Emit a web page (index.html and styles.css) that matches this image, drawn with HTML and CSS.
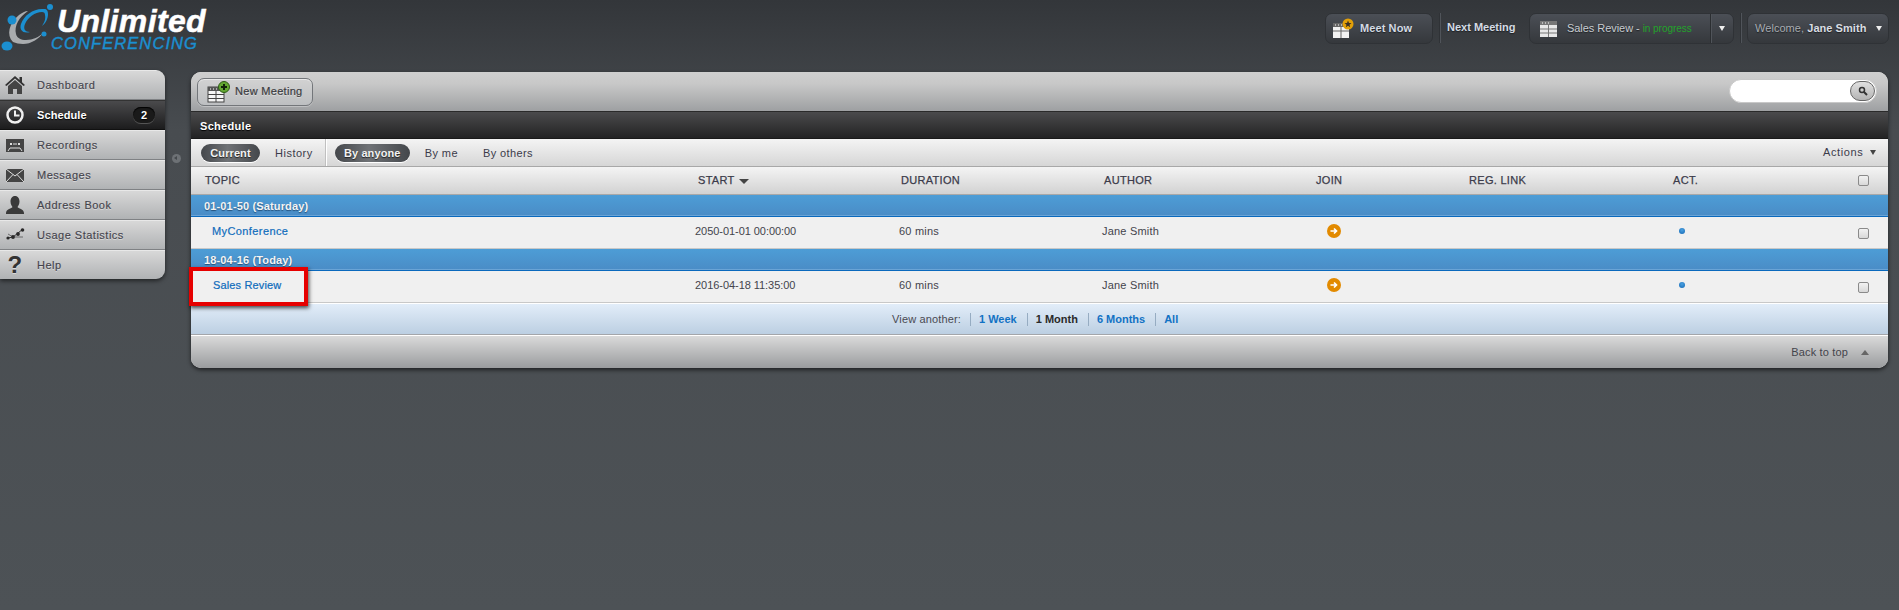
FILE: index.html
```html
<!DOCTYPE html>
<html lang="en">
<head>
<meta charset="utf-8">
<title>Schedule - Unlimited Conferencing</title>
<link rel="stylesheet" href="styles.css">
</head>
<body>
<header class="topbar">
  <div class="logo">
    <svg class="logo-mark" width="56" height="54" viewBox="0 0 56 54">
      <path d="M13 41C6 34 9 22 19 14c3-2 6-4 9-4-9 6-14 15-12 23 1 4 5 6 10 6 7 0 13-3 17-7-4 6-12 11-20 11-4 0-7-1-10-2z" fill="#a9acaf"/>
      <path d="M44 8C34 7 24 14 21 23c-2 6 2 10 9 8-5 0-7-3-5-8 3-7 10-12 17-12 2 0 3 1 3 3 1 4-1 8-3 11 4-3 6-8 6-12 0-3-1-5-4-5z" fill="#1b8fd0"/>
      <circle cx="50" cy="6" r="3" fill="#1b8fd0"/>
      <circle cx="12" cy="19" r="4.5" fill="#1b8fd0"/>
      <circle cx="44" cy="33" r="2.5" fill="#1b8fd0"/>
      <ellipse cx="7" cy="45" rx="5.5" ry="4.5" fill="#1b8fd0"/>
    </svg>
    <div class="logo-text">
      <div class="logo-top">Unlimited</div>
      <div class="logo-bottom">CONFERENCING</div>
    </div>
  </div>
  <div class="top-actions">
    <a class="top-btn meet">
      <svg class="ti" width="22" height="22" viewBox="0 0 22 22"><rect x="1" y="5" width="16" height="15" fill="#f2f2f2"/><rect x="1" y="5" width="16" height="4" fill="#666"/><path d="M3 7h1m2 0h1m2 0h1" stroke="#fff"/><path d="M1 13h16M9 9v11" stroke="#666"/><circle cx="16" cy="6" r="5.500" fill="#e3a008"/><path d="M16 2.500l1 2.500 2.500 0-2 1.800.7 2.500-2.200-1.500-2.200 1.500.7-2.500-2-1.800 2.500 0z" fill="#3b3024"/></svg>
      <span>Meet Now</span>
    </a>
    <i class="vline"></i>
    <span class="next-label">Next Meeting</span>
    <a class="top-btn sales">
      <svg class="ti" width="19" height="18" viewBox="0 0 19 18"><rect x="1" y="1" width="17" height="16" fill="#e8e8e8"/><rect x="1" y="1" width="17" height="4" fill="#777"/><path d="M3 3h1m2 0h1m2 0h1" stroke="#fff"/><path d="M1 9h17M1 13h17M9.500 5v12" stroke="#777"/></svg>
      <span class="sales-text">Sales Review - <em>in progress</em></span>
      <span class="caret-box"><b class="caret"></b></span>
    </a>
    <i class="vline"></i>
    <a class="top-btn welcome">
      <span class="welcome-text">Welcome, <strong>Jane Smith</strong></span>
      <b class="caret"></b>
    </a>
  </div>
</header>

<div class="content">
  <nav class="sidebar">
    <a class="nav-item">
      <svg class="nav-icon" width="20" height="20" viewBox="0 0 20 20"><path d="M10 1L0 10l1.500 1L10 3.500 18.500 11l1.500-1-3-2.700V2h-2.500v3z" fill="#333"/><path d="M3 11l7-6 7 6v8h-5v-5H8v5H3z" fill="#444"/></svg>
      <span>Dashboard</span>
    </a>
    <a class="nav-item active">
      <svg class="nav-icon" width="20" height="20" viewBox="0 0 20 20"><circle cx="10" cy="10" r="7.500" fill="none" stroke="#f0f0f0" stroke-width="2.500"/><path d="M10 5.500V10.500H14.500" fill="none" stroke="#f0f0f0" stroke-width="2"/></svg>
      <span>Schedule</span>
      <b class="badge">2</b>
    </a>
    <a class="nav-item">
      <svg class="nav-icon" width="20" height="20" viewBox="0 0 20 20"><path d="M1 4h18v13H1z" fill="#444"/><path d="M5 9h2m6 0h2" stroke="#ddd" stroke-width="2"/><path d="M8 9h4" stroke="#ddd"/><path d="M3 16l2-3h10l2 3" fill="none" stroke="#ddd"/></svg>
      <span>Recordings</span>
    </a>
    <a class="nav-item">
      <svg class="nav-icon" width="20" height="20" viewBox="0 0 20 20"><path d="M1 4h18v13H1z" fill="#444"/><path d="M1 4l9 7 9-7M1 17l7-7.500M19 17l-7-7.500" fill="none" stroke="#ddd"/></svg>
      <span>Messages</span>
    </a>
    <a class="nav-item">
      <svg class="nav-icon" width="20" height="20" viewBox="0 0 20 20"><path d="M10 1c3 0 4.500 2.500 4.500 5.500S13 11 12.500 12c.5 1.500 6.500 2 6.500 6v1H1v-1c0-4 6-4.500 6.500-6C7 11 5.500 9.500 5.500 6.500S7 1 10 1z" fill="#3a3a3a"/></svg>
      <span>Address Book</span>
    </a>
    <a class="nav-item">
      <svg class="nav-icon" width="20" height="20" viewBox="0 0 20 20"><path d="M3 13l5-1 5-4 5-4" fill="none" stroke="#333"/><path d="M3 9l5 3 5 0 5 0" fill="none" stroke="#444" stroke-width=".7"/><circle cx="3" cy="13" r="1.600" fill="#2a2a2a"/><circle cx="8" cy="12" r="1.900" fill="#2a2a2a"/><circle cx="13" cy="9" r="1.900" fill="#2a2a2a"/><circle cx="17.500" cy="5" r="1.800" fill="#2a2a2a"/></svg>
      <span>Usage Statistics</span>
    </a>
    <a class="nav-item last">
      <span class="help-icon">?</span>
      <span>Help</span>
    </a>
  </nav>

  <div class="handle"><span class="handle-dot"></span></div>

  <main class="panel">
    <div class="toolbar">
      <a class="new-btn">
        <svg width="24" height="22" viewBox="0 0 24 22"><rect x="1" y="6" width="16" height="15" fill="#f5f5f5" stroke="#444"/><rect x="1" y="6" width="16" height="4" fill="#555"/><path d="M3 8h1m2 0h1m2 0h1" stroke="#fff"/><path d="M1 13.500h16M1 17.500h16M9 10v11" stroke="#444"/><circle cx="17" cy="6" r="5.500" fill="#63a832" stroke="#2e5a16"/><path d="M14 6h6M17 3v6" stroke="#12240a" stroke-width="2"/></svg>
        <span>New Meeting</span>
      </a>
      <div class="search">
        <span class="search-btn">
          <svg width="10" height="10" viewBox="0 0 10 10"><circle cx="4" cy="4" r="2.500" fill="none" stroke="#333" stroke-width="1.500"/><path d="M6 6l3 3" stroke="#333" stroke-width="2"/></svg>
        </span>
      </div>
    </div>
    <div class="titlebar">Schedule</div>
    <div class="tabs">
      <a class="tab on">Current</a>
      <a class="tab hist">History</a>
      <i class="tab-sep"></i>
      <a class="tab on any">By anyone</a>
      <a class="tab me">By me</a>
      <a class="tab others">By others</a>
      <a class="actions">Actions <b class="caret dark"></b></a>
    </div>
    <div class="grid head">
      <div class="c-topic">TOPIC</div>
      <div class="c-start">START <b class="caret dark big"></b></div>
      <div>DURATION</div>
      <div>AUTHOR</div>
      <div>JOIN</div>
      <div>REG. LINK</div>
      <div>ACT.</div>
      <div class="c-check"><span class="check"></span></div>
    </div>
    <div class="group">01-01-50 (Saturday)</div>
    <div class="grid row">
      <div class="c-link"><a>MyConference</a></div>
      <div class="c-date">2050-01-01 00:00:00</div>
      <div>60 mins</div>
      <div>Jane Smith</div>
      <div class="c-join"><svg width="14" height="14" viewBox="0 0 14 14"><circle cx="7" cy="7" r="7" fill="#e28a00"/><path d="M3.500 7h5M7 4.500L9.500 7 7 9.500" fill="none" stroke="#fff" stroke-width="1.700"/></svg></div>
      <div></div>
      <div class="c-act"><span class="dot"></span></div>
      <div class="c-check low"><span class="check"></span></div>
    </div>
    <div class="group">18-04-16 (Today)</div>
    <div class="grid row">
      <div class="c-link two"><a>Sales Review</a></div>
      <div class="c-date">2016-04-18 11:35:00</div>
      <div>60 mins</div>
      <div>Jane Smith</div>
      <div class="c-join"><svg width="14" height="14" viewBox="0 0 14 14"><circle cx="7" cy="7" r="7" fill="#e28a00"/><path d="M3.500 7h5M7 4.500L9.500 7 7 9.500" fill="none" stroke="#fff" stroke-width="1.700"/></svg></div>
      <div></div>
      <div class="c-act"><span class="dot"></span></div>
      <div class="c-check low"><span class="check"></span></div>
    </div>
    <div class="view-bar">
      <span class="view-label">View another:</span>
      <a class="v">1 Week</a>
      <a class="v cur">1 Month</a>
      <a class="v">6 Months</a>
      <a class="v">All</a>
    </div>
    <div class="footer">
      <span>Back to top</span>
      <b class="up"></b>
    </div>
    <div class="callout"></div>
  </main>
</div>
</body>
</html>
```
FILE: styles.css
```css
* { box-sizing: border-box; }
html, body { margin: 0; height: 610px; overflow: hidden; }
body {
  background: linear-gradient(#33363a 0, #484c50 130px, #4d5256 100%);
  font: 11px/1 "Liberation Sans", Arial, sans-serif;
  letter-spacing: .4px;
  color: #3b3b40;
}
a { color: inherit; text-decoration: none; }

/* top bar */
.topbar { display: flex; height: 70px; justify-content: space-between; }
.logo { display: flex; padding-top: 1px; }
.logo-mark { display: block; }
.logo-text { margin-left: -4px; padding-top: 7px; font-style: italic; font-weight: bold; letter-spacing: 0; }
.logo-top { color: #fff; font-size: 32px; line-height: 27px; padding-left: 5px; letter-spacing: .35px; -webkit-text-stroke: .5px #fff; }
.logo-bottom { color: #1b8fd0; font-size: 16.5px; font-weight: normal; line-height: 14px; margin-top: 1px; letter-spacing: 1.1px; -webkit-text-stroke: .4px #1b8fd0; margin-left: -1px; }

.top-actions { display: flex; align-items: flex-start; padding: 13px 10px 0 0; }
.top-btn {
  display: flex; align-items: center; height: 31px;
  border: 1px solid #2f3236; border-radius: 7px;
  background: linear-gradient(#4b4f56, #35383c);
  color: #c8ccd2; font-weight: bold; text-shadow: 0 1px 1px #1f2124;
}
.meet { width: 108px; padding-left: 6px; }
.meet span { margin-left: 6px; color: #d4dbe4; letter-spacing: .1px; }
.vline { width: 1px; height: 30px; margin: 0 6px; background: #2f3236; box-shadow: 1px 0 0 #50545a; }
.next-label { width: 83px; margin-top: 9px; padding-left: 1px; font-weight: bold; color: #d4dbe4; letter-spacing: 0; text-shadow: 0 1px 1px #1f2124; }
.sales { width: 205px; padding-left: 9px; }
.sales-text { margin-left: 9px; width: 143px; font-weight: normal; font-size: 11px; letter-spacing: -.05px; }
.sales-text em { font-style: normal; color: #22a32a; font-size: 10px; text-shadow: none; }
.caret-box { display: flex; height: 100%; align-items: center; justify-content: center; flex: 1; border-left: 1px solid #2b2e31; box-shadow: inset 1px 0 0 #50545a; }
.caret { display: inline-block; width: 0; height: 0; border: 3.500px solid transparent; border-top: 5px solid #eee; border-bottom: 0; }
.caret.dark { border-top-color: #444; vertical-align: 1px; margin-left: 3px; }
.caret.big { border-width: 5px 5px 0; margin-left: 1px; vertical-align: 0; }
.welcome { width: 142px; padding-left: 7px; gap: 10px; letter-spacing: .05px; }
.welcome-text { font-weight: normal; color: #a8acb2; white-space: nowrap; }
.welcome-text strong { color: #d9dde2; }

/* page body */
.content { display: flex; align-items: flex-start; }
.sidebar {
  width: 165px; flex: none; border-radius: 0 9px 9px 0; overflow: hidden;
  box-shadow: 0 2px 4px rgba(0,0,0,.55);
}
.nav-item {
  display: flex; align-items: center; height: 30px; padding-left: 5px; position: relative;
  background: linear-gradient(#d8d8d8, #b0b2b4);
  border-bottom: 1px solid #7f8184;
  border-top: 1px solid #e8e8e8;
  color: #44444c;
  text-shadow: 0 1px 0 rgba(255,255,255,.45);
}
.nav-item.last { border-bottom: 0; height: 29px; }
.nav-item > span:not(.help-icon) { margin-left: 12px; font-size: 11px; letter-spacing: .5px; -webkit-text-stroke: .15px #44444c; }
.nav-icon { flex: none; }
.nav-item.active {
  background: linear-gradient(#4a4a4c, #1c1c1d);
  border-top-color: #333; border-bottom-color: #111;
  color: #fff; font-weight: bold; text-shadow: 0 1px 1px #000;
}
.nav-item.active > span:not(.help-icon) { letter-spacing: .1px; -webkit-text-stroke: 0; }
.badge {
  position: absolute; right: 10px; top: 6px; width: 22px; height: 16px; border-radius: 8px;
  background: #1a1a1a; box-shadow: 0 1px 0 #555, inset 0 1px 1px #000;
  color: #fff; text-align: center; line-height: 16px; letter-spacing: 0;
}
.help-icon { width: 20px; text-align: center; font: bold 24px/20px "Liberation Sans", sans-serif; color: #333; }

.handle { width: 26px; flex: none; padding: 84px 0 0 7px; }
.handle-dot { display: block; width: 9px; height: 9px; border-radius: 50%; background: #6d7175; padding: 2px 0 0 2px; }
.handle-dot::before { content: ""; display: block; width: 0; height: 0; border: 2.500px solid transparent; border-right: 3px solid #44484c; border-left: 0; }

.panel {
  position: relative; width: 1697px; margin-top: 2px; flex: none;
  border-radius: 10px; background: #eee;
  box-shadow: 0 2px 4px rgba(0,0,0,.6);
  overflow: visible;
}
.toolbar {
  display: flex; justify-content: space-between; align-items: center;
  height: 39px; padding: 0 11px 0 6px; border-radius: 10px 10px 0 0;
  background: linear-gradient(#cfcfcf 0, #c8c8c8 30%, #9ea0a2 100%);
}
.new-btn {
  display: flex; align-items: center; width: 116px; height: 28px; padding-left: 9px;
  border: 1px solid #73767a; border-radius: 7px;
  background: linear-gradient(#d2d2d2, #bdbfc1);
  color: #3b3b40; box-shadow: inset 0 1px 0 #e8e8e8, 0 1px 0 rgba(255,255,255,.3);
  text-shadow: 0 1px 0 rgba(255,255,255,.4);
}
.new-btn span { margin-left: 4px; font-size: 11px; letter-spacing: .3px; font-weight: normal; -webkit-text-stroke: .2px #3b3b40; }
.search {
  display: flex; justify-content: flex-end; align-items: center; width: 148px; height: 24px; padding-right: 1px;
  border-radius: 12px; background: #fff; border: 1px solid #c8c8c8; margin-top: -1px;
}
.search-btn {
  display: flex; align-items: center; justify-content: center; width: 25px; height: 20px;
  border-radius: 10px; border: 1px solid #666; background: linear-gradient(#e0e0e0, #b4b4b4);
}
.titlebar {
  height: 28px; padding: 9px 0 0 9px;
  background: linear-gradient(#4a4a4c, #232324);
  border-top: 1px solid #2a2a2a; border-bottom: 1px solid #1a1a1a;
  color: #fff; font-weight: bold; font-size: 11px; letter-spacing: .3px; text-shadow: 0 1px 1px #000;
}
.tabs {
  display: flex; align-items: center; height: 28px; padding-left: 10px;
  background: linear-gradient(#f4f4f4, #d6d6d6);
  border-bottom: 1px solid #a8a8a8; color: #3b3b4a;
}
.tab { display: block; line-height: 18px; height: 18px; }
.tab.on {
  width: 59px; text-align: center; border-radius: 9px; color: #f2f2f2; font-weight: bold; letter-spacing: .1px;
  background: linear-gradient(90deg, #44474b, #6f7276 45%, #44474b); text-shadow: 0 1px 1px #222;
  box-shadow: 0 1px 0 #fff;
}
.tab.on.any { width: 75px; margin-left: 9px; }
.hist { margin-left: 15px; letter-spacing: .5px; }
.tab-sep { width: 1px; height: 27px; margin-left: 12px; background: #c0c0c0; box-shadow: 1px 0 0 #fff; }
.me { margin-left: 15px; }
.others { margin-left: 25px; }
.actions { margin-left: auto; margin-right: 12px; font-size: 11px; letter-spacing: .6px; }

.grid { display: grid; grid-template-columns: 504px 204px 203px 212px 153px 204px 179px 38px; }
.head {
  height: 28px; align-items: center;
  background: linear-gradient(#f4f4f4, #d2d2d2);
  border-bottom: 1px solid #a8a8a8; color: #3b3b4a; font-weight: normal; letter-spacing: .3px; -webkit-text-stroke: .25px #3b3b4a;
}
.head > div { padding-left: 2px; }
.head > .c-topic { padding-left: 14px; }
.head > .c-start { padding-left: 3px; }
.group {
  height: 22px; padding: 6px 0 0 13px;
  background: linear-gradient(#4d9dd6, #4a8cc6);
  border-bottom: 1px solid #0a69bd; box-shadow: inset 0 -1px 0 #6aa4d6;
  color: #f4f4f4; font-weight: bold; letter-spacing: .15px; text-shadow: 0 1px 1px #24507a;
}
.row {
  height: 32px; align-items: center; background: #f0f0f0; padding-bottom: 2px; letter-spacing: .2px;
  border-bottom: 1px solid #c8c8c8; color: #44444c;
}
.c-date { letter-spacing: -.05px; }
.c-link { padding-left: 21px; letter-spacing: .4px; }
.c-link.two { padding-left: 22px; letter-spacing: .15px; }
.c-link a { color: #0f6cbc; font-weight: normal; -webkit-text-stroke: .2px #0f6cbc; }
.c-join { display: flex; padding-left: 13px; margin-top: -1px; }
.c-act { display: flex; padding-left: 8px; margin-top: -1px; }
.dot { width: 6px; height: 6px; border-radius: 50%; background: radial-gradient(circle at 50% 35%, #4aa0e0, #1468b4); }
.c-check { padding-left: 8px !important; display: flex; }
.c-check.low { padding-top: 4px !important; }
.check { display: block; width: 11px; height: 11px; border: 1px solid #8a8a8a; border-radius: 2px; background: linear-gradient(#f2f2f2, #d8d8d8); }

.view-bar {
  display: flex; align-items: center; height: 32px; padding-left: 701px;
  background: linear-gradient(#e2edf9, #bccfe2);
  border-top: 1px solid #fff; border-bottom: 1px solid #a4a6aa; color: #4a4a52;
}
.view-label { width: 78px; letter-spacing: .15px; }
.v { display: flex; align-items: center; height: 13px; padding: 0 10px 0 8px; border-left: 1px solid #96acc2; color: #1272c4; font-weight: bold; letter-spacing: 0; }
.v.cur { color: #2a2a2a; }
.footer {
  display: flex; justify-content: flex-end; align-items: center; gap: 13px;
  height: 33px; padding-right: 19px; border-radius: 0 0 10px 10px;
  background: linear-gradient(#dadada, #9a9c9e); color: #44444c; letter-spacing: .15px;
  border-top: 1px solid #fff;
}
.up { width: 0; height: 0; border: 4px solid transparent; border-bottom: 5px solid #666; border-top: 0; }

.callout {
  position: absolute; left: -2px; top: 195px; width: 119px; height: 39px;
  border: 4px solid #e60000; box-shadow: 1px 2px 4px rgba(0,0,0,.7);
}
```
